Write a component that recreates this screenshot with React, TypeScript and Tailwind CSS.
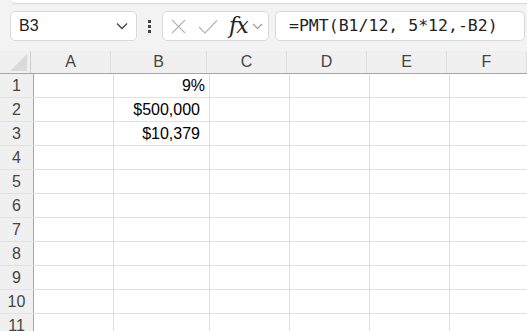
import React from "react";

const cols = ["A", "B", "C", "D", "E", "F"];
const widths = ["w-[80px]", "w-[96px]", "w-[80px]", "w-[80px]", "w-[80px]", "w-[80px]"];
const data: Record<number, string> = { 1: "9%", 2: "$500,000", 3: "$10,379" };

export default function App() {
  const rows = Array.from({ length: 11 }, (_, i) => i + 1);
  return (
    <div className="w-[527px] h-[331px] overflow-hidden bg-[#f3f3f3] font-['Liberation_Sans',Arial,sans-serif]">
      <div className="h-[3px] ml-[12px] bg-white rounded-bl-[4px] shadow-[0_1px_1px_rgba(0,0,0,0.12)]" />
      <div className="mt-[8px] h-[30px] flex items-center pl-[10px]">
        <div className="w-[127px] h-[30px] bg-white border border-[#d9d9d9] rounded-[5px] flex items-center justify-between pl-[8px] pr-[8px]">
          <span className="text-[16px] text-[#222]">B3</span>
          <svg width="12" height="8" viewBox="0 0 12 8">
            <path d="M1 1.5 L6 6.5 L11 1.5" fill="none" stroke="#444" strokeWidth="1.3" />
          </svg>
        </div>
        <div className="w-[25px] flex flex-col items-center gap-[2px]">
          <div className="w-[3px] h-[3px] bg-[#444]" />
          <div className="w-[3px] h-[3px] bg-[#444]" />
          <div className="w-[3px] h-[3px] bg-[#444]" />
        </div>
        <div className="w-[107px] h-[30px] bg-white border border-[#d9d9d9] rounded-[5px] flex items-center pl-[8px]">
          <svg width="15" height="15" viewBox="0 0 15 15">
            <path d="M1 1 L14 14 M14 1 L1 14" stroke="#b5b5b5" strokeWidth="1.2" fill="none" />
          </svg>
          <svg width="20" height="15" viewBox="0 0 20 15" className="ml-[12px]">
            <path d="M1 8 L7 14 L19 1.5" stroke="#b5b5b5" strokeWidth="1.2" fill="none" />
          </svg>
          <span className="ml-[11px] text-[22px] leading-none italic text-[#222] font-['DejaVu_Serif','Liberation_Serif',serif] tracking-[-1px]">fx</span>
          <svg width="11" height="7" viewBox="0 0 11 7" className="ml-[4px]">
            <path d="M1 1 L5.5 5.5 L10 1" fill="none" stroke="#9a9a9a" strokeWidth="1.2" />
          </svg>
        </div>
        <div className="ml-[6px] w-[250px] h-[30px] bg-white border border-[#d9d9d9] rounded-[5px] flex items-center pl-[13px]">
          <span className="text-[16.5px] text-[#222] font-['DejaVu_Sans_Mono','Liberation_Mono',monospace] whitespace-pre">=PMT(B1/12, 5*12,-B2)</span>
        </div>
      </div>
      <div className="mt-[10px]">
        <div className="flex h-[23px] bg-[#f0f0f0] border-b border-[#a6a6a6]">
          <div className="w-[34px] border-r border-[#cfcfcf] flex items-end justify-end pr-[3px] pb-[2px]">
            <svg width="17" height="17" viewBox="0 0 17 17">
              <path d="M17 0 L17 17 L0 17 Z" fill="#dadada" />
            </svg>
          </div>
          {cols.map((c, i) => (
            <div key={c} className={`${widths[i]} shrink-0 border-r border-[#dedede] flex items-center justify-center text-[16px] text-[#444]`}>
              {c}
            </div>
          ))}
        </div>
        {rows.map((r) => (
          <div key={r} className="flex h-[24px] border-b border-[#e1e1e1] bg-white">
            <div className="w-[34px] shrink-0 bg-[#f0f0f0] border-r border-[#a6a6a6] flex items-center justify-center text-[16px] text-[#444]">
              {r}
            </div>
            {cols.map((c, i) => (
              <div
                key={c}
                className={`${widths[i]} shrink-0 border-r border-[#e1e1e1] flex items-center justify-end ${c === "B" && r > 1 ? "pr-[9px]" : "pr-[4px]"} text-[16px] text-black`}
              >
                {c === "B" ? data[r] ?? "" : ""}
              </div>
            ))}
          </div>
        ))}
      </div>
    </div>
  );
}
